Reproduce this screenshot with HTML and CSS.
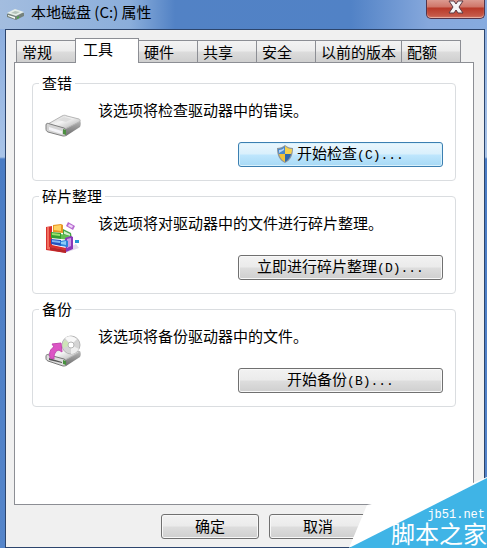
FILE: index.html
```html
<!DOCTYPE html>
<html lang="zh-CN">

<head>
    <meta charset="utf-8">
    <meta name="viewport" content="width=device-width, initial-scale=1.0">
    <title>本地磁盘 (C:) 属性</title>
    <link rel="stylesheet" href="styles.css">
</head>

<body>
    <div class="window">
        <header class="titlebar">
            <svg class="title-icon" width="20" height="14" viewBox="0 0 20 14" aria-hidden="true">
                <path d="M1 7 9 3l9 3v3l-8 4-9-3z" fill="#75827d" />
                <path d="M1 6 9 2l9 3-8 4z" fill="#e6eee9" />
                <path d="M5 6 9 4l5 1-4 2z" fill="#b4c3bb" />
                <path d="m2 8 7 2v2L2 9z" fill="#f4faf6" />
                <path d="m11 10 2-1v2l-2 1z" fill="#4fa34c" />
            </svg>
            <h1 class="title">本地磁盘 (C:) 属性</h1>
            <button class="close" type="button" aria-label="关闭">
                <svg width="16" height="14" viewBox="0 0 16 14" aria-hidden="true">
                    <path d="M1 1h5l2 3 2-3h5l-4 6 4 6h-5l-2-3-2 3H1l4-6z" fill="#f5f5f5" stroke="#5b3a44" stroke-width="1" />
                </svg>
            </button>
        </header>

        <main class="dialog">
            <div class="tabs" role="tablist">
                <button class="tab" type="button" role="tab">常规</button>
                <button class="tab tab-active" type="button" role="tab" aria-selected="true">工具</button>
                <button class="tab" type="button" role="tab">硬件</button>
                <button class="tab" type="button" role="tab">共享</button>
                <button class="tab" type="button" role="tab">安全</button>
                <button class="tab" type="button" role="tab">以前的版本</button>
                <button class="tab" type="button" role="tab">配额</button>
            </div>

            <div class="panel" role="tabpanel">
                <fieldset class="group">
                    <legend>查错</legend>
                    <div class="group-body">
                        <svg class="group-icon" width="38" height="36" viewBox="0 0 38 36" aria-hidden="true">
                            <defs>
                                <linearGradient id="metal" x1="0" y1="0" x2="1" y2="1">
                                    <stop offset="0" stop-color="#c9c9c9" />
                                    <stop offset="0.45" stop-color="#f4f4f4" />
                                    <stop offset="1" stop-color="#aaa" />
                                </linearGradient>
                                <linearGradient id="side" x1="0" y1="0" x2="0" y2="1">
                                    <stop offset="0" stop-color="#b9b9b9" />
                                    <stop offset="1" stop-color="#6d6d6d" />
                                </linearGradient>
                            </defs>
                            <path d="m19 19 16-8c1 2 1 5 0 7l-14 9-2-1z" fill="url(#side)" />
                            <path d="M3 15 17 7c2-1 3-1 5 0l12 3c2 1 1 2 0 3l-14 7z" fill="url(#metal)" stroke="#b5b5b5" />
                            <path d="M1 16c0-2 2-2 4-1l14 4c2 1 2 2 2 4v3c0 1-1 1-3 1L3 23c-2-1-2-2-2-4z" fill="#d4d4d4" stroke="#808080" />
                            <path d="m4 18 13 4v3L4 21z" fill="#f4f4f8" />
                            <path d="m18 20 3 1v5l-3-1z" fill="#4d8f41" />
                            <path d="m13 11 6-3 8 2-6 3z" fill="#ddd" />
                        </svg>
                        <p>该选项将检查驱动器中的错误。</p>
                        <button class="btn btn-focus" type="button">
                            <svg width="16" height="18" viewBox="0 0 16 18" aria-hidden="true">
                                <path d="M8 0c2 2 5 3 8 3 0 7-2 12-8 15C2 15 0 10 0 3c3 0 6-1 8-3z" fill="#8c959c" />
                                <path d="M8 1v8H2C1 7 1 5 1 4c3 0 5-1 7-3z" fill="#4788cc" />
                                <path d="M8 1c2 2 4 3 7 3 0 1 0 3-1 5H8z" fill="#f5d14d" />
                                <path d="M2 9h6v8c-3-2-5-4-6-8z" fill="#efc23b" />
                                <path d="M8 9h6c-1 4-3 6-6 8z" fill="#2f67ad" />
                                <path d="M2 5c2 0 4-1 5-2v2L2 8z" fill="#b7d4f2" />
                            </svg>
                            <span>开始检查<span class="key">(C)...</span></span>
                        </button>
                    </div>
                </fieldset>

                <fieldset class="group">
                    <legend>碎片整理</legend>
                    <div class="group-body">
                        <svg class="group-icon" width="38" height="36" viewBox="0 0 38 36" aria-hidden="true">
                            <path d="m20 31 14-5-3-4-10 5z" fill="#e2dceb" />
                            <path d="m1 5 6-1v19l14 3v5L1 28z" fill="#d8302d" />
                            <path d="m2 5 2 0v20l17 3v2L2 27z" fill="#f07060" />
                            <path d="m5 25 16 3v3L5 28z" fill="#b7262a" />
                            <path d="m8 3 8-1 2 1v8l-10-1z" fill="#e89625" />
                            <path d="m9 4 7-1v6l-7-1z" fill="#ffd363" />
                            <path d="m6 10 10 1v6L6 16z" fill="#329d31" />
                            <path d="m7 11 8 1v2l-8-1z" fill="#9be26c" />
                            <path d="m18 7 8 4 1 6-9-3z" fill="#45a545" />
                            <path d="m19 9 6 3v2l-6-2z" fill="#d0f1c7" />
                            <path d="m6 17 10 1v6L6 22z" fill="#2450bd" />
                            <path d="m7 18 8 1v2l-8-1z" fill="#80b7f4" />
                            <path d="m16 12 9 2v4l-9-1z" fill="#62bd51" />
                            <path d="m20 16 6-2 2 1v12l-7 3z" fill="#8b38b9" />
                            <path d="m22 17 4-1v8l-4 2z" fill="#c99be5" />
                            <path d="m15 19 6-1 2 1v6l-7-1z" fill="#2e84da" />
                            <path d="m16 20 5-1v4l-5-1z" fill="#8dcbf8" />
                            <path d="m23 0 7 4-2 4-7-4z" fill="#b66bd0" />
                            <path d="m24 2 4 2-1 2-4-2z" fill="#efd7f8" />
                            <path d="M30 18h4v3h-4z" fill="#2696d4" />
                        </svg>
                        <p>该选项将对驱动器中的文件进行碎片整理。</p>
                        <button class="btn" type="button"><span>立即进行碎片整理<span class="key">(D)...</span></span></button>
                    </div>
                </fieldset>

                <fieldset class="group">
                    <legend>备份</legend>
                    <div class="group-body">
                        <svg class="group-icon" width="38" height="36" viewBox="0 0 38 36" aria-hidden="true">
                            <path d="m20 23 15-7c1 2 1 4 0 6l-14 9-2-1z" fill="url(#side)" />
                            <path d="m2 20 14-8 19 5-15 8z" fill="url(#metal)" stroke="#b5b5b5" />
                            <circle cx="26" cy="10" r="9" fill="#d4d4d4" stroke="#b5b5b5" />
                            <path d="M26 10 20 3c4-3 8-2 12 1z" fill="#f8f8f8" />
                            <path d="m26 10-8 3c-1-3 0-6 2-8z" fill="#cde4b7" />
                            <path d="m26 10 8 4c-2 3-5 5-8 5z" fill="#eee" />
                            <circle cx="26" cy="10" r="3" fill="#fff" stroke="#b5b5b5" />
                            <path d="M1 21c0-1 1-2 3-1l15 4c2 1 2 2 2 4v2c0 1-1 1-3 1L3 26c-2-1-2-2-2-3z" fill="#ddd" stroke="#777" />
                            <path d="m4 23 13 4v1L4 25z" fill="#555" />
                            <path d="m18 25 3 1v4l-3-1z" fill="#47913e" />
                            <path d="M5 23c-1-5 0-9 4-11L7 9l9-1 1 9-3-2c-4 1-5 4-5 9z" fill="#dc55c5" stroke="#c348b0" />
                        </svg>
                        <p>该选项将备份驱动器中的文件。</p>
                        <button class="btn" type="button"><span>开始备份<span class="key">(B)...</span></span></button>
                    </div>
                </fieldset>
            </div>

            <footer class="actions">
                <button class="btn" type="button">确定</button>
                <button class="btn" type="button">取消</button>
            </footer>
        </main>

        <!-- site corner badge -->
        <div class="corner">
            <svg class="corner-bg" viewBox="0 0 138 72" aria-hidden="true">
                <path d="M18 29 124 7 138 1v7L0 72z" fill="#fff" />
                <path d="M138 2v70H0z" fill="#3fb4e6" />
            </svg>
            <span class="corner-url">jb51.net</span>
            <span class="corner-name">脚本之家</span>
        </div>
    </div>
</body>

</html>
```
FILE: styles.css
```css
* {
    box-sizing: border-box;
}

body {
    margin: 0;
    color: #000;
    font-family: "Noto Sans CJK SC", sans-serif;
    font-size: 15px;
    line-height: 20px;
}

button {
    font: inherit;
    color: inherit;
    margin: 0;
}

.window {
    position: relative;
    display: flex;
    flex-direction: column;
    min-height: 100vh;
    overflow: hidden;
    padding: 0 2px 0 5px;
    background: linear-gradient(#86a9dc 0, #a9c4e8 157px, #4a7cc4 159px, #5585ca 100%);
}

.titlebar {
    display: flex;
    align-items: flex-start;
    height: 29px;
    margin: 0 -2px 0 -5px;
    padding: 0 2px 0 6px;
    background: linear-gradient(90deg, #a3bddf 0, #8baedb 130px, #5282c5 175px, #5182c6 72%, #86a8dc 88%, #86abdf 100%);
}

.title-icon {
    margin-top: 7px;
}

.title {
    flex: 1;
    margin: 0;
    padding: 2px 5px;
    font-size: 15px;
    font-weight: 400;
}

.close {
    display: flex;
    align-items: center;
    justify-content: center;
    width: 59px;
    height: 19px;
    padding: 0 0 4px;
    border: 1px solid #54344a;
    border-top: 0;
    border-radius: 0 0 5px 5px;
    background: linear-gradient(#dc9a90 0, #cf7568 7px, #b83828 8px, #c96252 100%);
    box-shadow: inset 0 -1px 1px #eab5a9;
}

.dialog {
    flex: 1;
    display: flex;
    flex-direction: column;
    padding: 8px 10px 8px 8px;
    border: 1px solid #2c456d;
    background: #f0f0f0;
}

.tabs {
    display: flex;
    align-items: flex-end;
    padding-left: 2px;
}

.tab {
    min-width: 60px;
    height: 22px;
    padding: 0 5px;
    border: 1px solid #8c8e94;
    border-bottom: 0;
    background: linear-gradient(#f3f3f3 0, #ebebeb 10px, #dcdcdc 11px, #cfcfcf 100%);
    text-align: left;
    line-height: 18px;
}

.tab + .tab {
    margin-left: -1px;
}

.tab-active {
    position: relative;
    z-index: 1;
    min-width: 64px;
    height: 25px;
    margin-bottom: -1px;
    padding: 0 7px 5px;
    background: #fff;
}

.panel {
    flex: 1;
    display: flex;
    flex-direction: column;
    gap: 6px;
    padding: 11px 17px;
    border: 1px solid #8c8e94;
    background: #fff;
}

.group {
    margin: 0;
    padding: 0 12px 13px;
    border: 1px solid #dadde0;
    border-radius: 4px;
}

.group legend {
    margin-left: -6px;
    padding: 0 3px;
    line-height: 18px;
}

.group-body {
    display: grid;
    grid-template-columns: 38px 1fr;
    column-gap: 15px;
    row-gap: 22px;
    padding-top: 8px;
}

.group-icon {
    grid-row: 1 / 3;
    margin-top: 9px;
}

.group p {
    margin: 0;
}

.btn {
    display: flex;
    align-items: center;
    justify-content: center;
    gap: 4px;
    width: 98px;
    height: 25px;
    padding: 0 4px 1px;
    border: 1px solid #707070;
    border-radius: 3px;
    background: linear-gradient(#f2f2f2 0, #ebebeb 11px, #dddddd 12px, #cfcfcf 100%);
    box-shadow: inset 0 0 0 1px #f8f8f8;
}

.group .btn {
    justify-self: end;
    width: 205px;
}

.btn-focus {
    border-color: #3c7fb1;
    background: linear-gradient(#eaf6fd 0, #d9f0fc 11px, #bee6fd 12px, #a7d9f5 100%);
    box-shadow: inset 0 0 0 1px #d8f1fc;
}

.key {
    font-family: "Liberation Mono", monospace;
    font-size: 13px;
}

.actions {
    display: flex;
    justify-content: flex-end;
    gap: 10px;
    padding: 9px 107px 0 0;
}

.corner {
    position: absolute;
    right: 0;
    bottom: 0;
    display: flex;
    flex-direction: column;
    align-items: flex-end;
    justify-content: flex-end;
    width: 138px;
    height: 72px;
    color: #fff;
}

.corner-bg {
    position: absolute;
    inset: 0;
}

.corner-url {
    position: relative;
    padding-right: 2px;
    font-family: "Liberation Mono", monospace;
    font-size: 12px;
    line-height: 14px;
}

.corner-name {
    position: relative;
    font-family: "Liberation Sans", "Noto Sans CJK SC", sans-serif;
    font-size: 24px;
    line-height: 26px;
}
```
